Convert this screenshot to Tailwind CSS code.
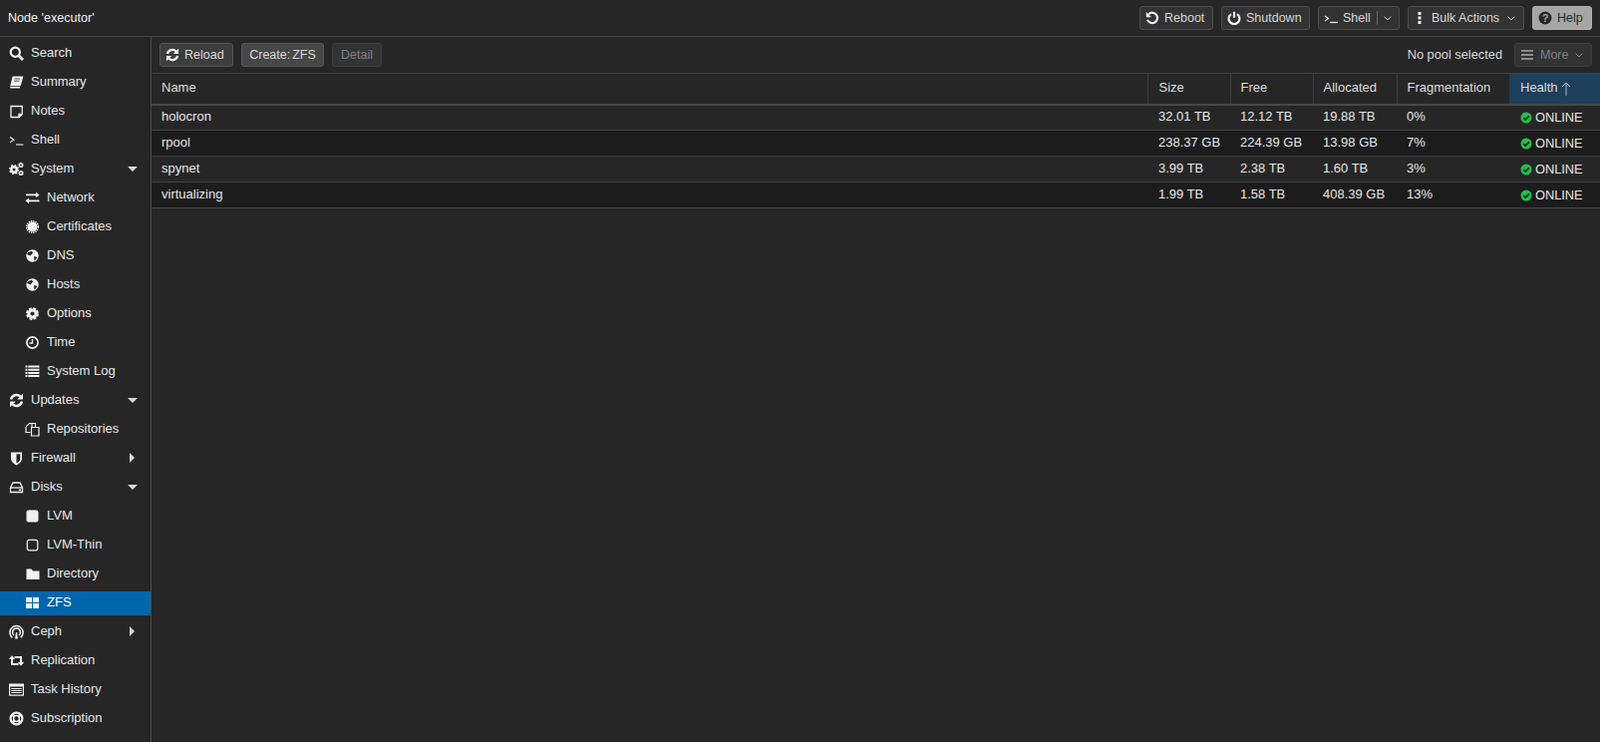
<!DOCTYPE html>
<html lang="en">
<head>
<meta charset="UTF-8">
<title>Node 'executor'</title>
<script src="https://cdn.jsdelivr.net/npm/@tailwindcss/browser@4"></script>
</head>
<body class="bg-[#262626] text-[#f2f2f2] font-['Liberation_Sans',Arial,sans-serif] text-[13px] h-[744px] w-[1605px] overflow-hidden flex flex-col">

<!-- top bar -->
<header class="h-[37px] border-b border-[#3f3f3f] flex items-center justify-between pl-2 pr-2">
	<div class="text-[12.6px]">Node 'executor'</div>
	<div class="flex items-center gap-2 text-[12.5px] text-[#d8d8d8]">
		<button class="h-6 w-[74px] flex items-center gap-[5px] pl-[5px] rounded-[3px] border border-[#4d4d4d] bg-[#333333]">
			<svg class="w-3.5 h-3.5" viewBox="0 0 14 14" fill="none" stroke="#f2f2f2" stroke-width="2.2"><path d="M3.200 3.200A5.200 5.200 0 1 1 2 8.800"/><path d="M.8 1v5.200H6z" fill="#f2f2f2" stroke="none"/></svg>Reboot</button>
		<button class="h-6 w-[89px] flex items-center gap-[5px] pl-[5px] rounded-[3px] border border-[#4d4d4d] bg-[#333333]">
			<svg class="w-3.5 h-3.5" viewBox="0 0 14 14" fill="none" stroke="#f2f2f2" stroke-width="2.2"><path d="M4 3.200a5.400 5.400 0 1 0 6 0"/><path d="M7 .8v6"/></svg>Shutdown</button>
		<button class="h-6 w-[82px] flex items-center pl-[5px] rounded-[3px] border border-[#4d4d4d] bg-[#333333]">
			<svg class="w-[14px] h-3 mr-[5px]" viewBox="0 0 14 12" fill="none" stroke="#f2f2f2" stroke-width="1.2"><path d="M1 4l3.500 2.500L1 9"/><path d="M6 10.500h8"/></svg>Shell<span class="w-px h-[14px] bg-[#666666] ml-1.5 mr-1.5"></span>
			<svg class="w-2 h-2" viewBox="0 0 8 8" fill="none" stroke="#bbbbbb"><path d="M.5 2.500L4 6l3.500-3.500"/></svg></button>
		<button class="h-6 w-[117px] flex items-center pl-[9px] rounded-[3px] border border-[#4d4d4d] bg-[#333333]">
			<svg class="w-1 h-3 mr-[10px]" viewBox="0 0 4 12" fill="#f2f2f2"><rect x="0.500" width="3" height="3"/><rect x="0.500" y="4.500" width="3" height="3"/><rect x="0.500" y="9" width="3" height="3"/></svg>Bulk Actions
			<svg class="w-2 h-2 ml-2" viewBox="0 0 8 8" fill="none" stroke="#bbbbbb"><path d="M.5 2.500L4 6l3.500-3.500"/></svg></button>
		<button class="h-6 w-[60px] flex items-center gap-[5px] pl-[5px] rounded-[3px] border border-[#b0b0b0] bg-[#a6a6a6] text-[#2a2a2a]">
			<svg class="w-3.5 h-3.5" viewBox="0 0 14 14"><circle cx="7" cy="7" r="6.500" fill="#262626"/><text x="7" y="11" text-anchor="middle" font-size="11" font-weight="700" fill="#a6a6a6">?</text></svg>Help</button>
	</div>
</header>

<div class="flex flex-1 min-h-0">
	<!-- tree menu -->
	<nav class="w-[152px] shrink-0 border-r border-[#4a4a4a] pt-[4px] flex flex-col gap-[5px] text-[#e6e6e6]">
		<div class="h-6 flex items-center pl-[9px]"><svg class="w-[15px] h-[15px] mr-[7px]" viewBox="0 0 15 15" fill="none" stroke="#f2f2f2" stroke-width="2.200"><circle cx="6.300" cy="6.300" r="4.600"/><path d="M9.800 9.800l4.200 4.200" stroke-width="2.800"/></svg>Search</div>
		<div class="h-6 flex items-center pl-[9px]"><svg class="w-[15px] h-[15px] mr-[7px]" viewBox="0 0 15 15" fill="#f2f2f2"><path d="M3.600 1.500h10.800l-2.600 9.500H1.200z"/><path d="M1 11.800h10.200l-.3 1.700H1.400z"/><path d="M5.500 4h5.500M5 6.200h5.500" stroke="#262626" stroke-width=".8"/></svg>Summary</div>
		<div class="h-6 flex items-center pl-[9px]"><svg class="w-[15px] h-[15px] mr-[7px]" viewBox="0 0 15 15" fill="none" stroke="#f2f2f2" stroke-width="1.300"><path d="M2 2.500h11.200v8l-3 3H2z"/><path d="M13 10.500h-3v3" fill="#f2f2f2"/></svg>Notes</div>
		<div class="h-6 flex items-center pl-[9px]"><svg class="w-[15px] h-[15px] mr-[7px]" viewBox="0 0 15 15" fill="none" stroke="#f2f2f2" stroke-width="1.100"><path d="M1 4.500l4 2.700-4 2.700"/><path d="M7 12h7.500"/></svg>Shell</div>
		<div class="h-6 flex items-center pl-[9px] relative"><svg class="w-[15px] h-[15px] mr-[7px]" viewBox="0 0 15 15" fill="none" stroke="#f2f2f2"><circle cx="5" cy="8" r="2.700" stroke-width="2.400"/><circle cx="5" cy="8" r="4.300" stroke-width="1.600" stroke-dasharray="1.700 1.680"/><circle cx="12" cy="3.500" r="1.700" stroke-width="1.600"/><circle cx="12" cy="11.500" r="1.700" stroke-width="1.600"/></svg>System<span class="absolute left-[128px] w-0 h-0 border-x-[5px] border-x-transparent border-t-[5px] border-t-[#d9d9d9]"></span></div>
		<div class="h-6 flex items-center pl-[25px]"><svg class="w-[15px] h-[15px] mr-[7px]" viewBox="0 0 15 15" fill="#f2f2f2"><path d="M1 3.500h10V1.500l3.500 2.900L11 7.200V5.300H1zM14.500 9.500H4V7.500L.5 10.300 4 13.200v-1.900h10.500z"/></svg>Network</div>
		<div class="h-6 flex items-center pl-[25px]"><svg class="w-[15px] h-[15px] mr-[7px]" viewBox="0 0 15 15"><circle cx="7.500" cy="7.500" r="5" fill="#f2f2f2"/><circle cx="7.500" cy="7.500" r="5.800" fill="none" stroke="#f2f2f2" stroke-width="1.600" stroke-dasharray="1.300 .98"/></svg>Certificates</div>
		<div class="h-6 flex items-center pl-[25px]"><svg class="w-[15px] h-[15px] mr-[7px]" viewBox="0 0 15 15"><circle cx="7.500" cy="7.500" r="6.200" fill="#f2f2f2"/><path d="M3 4l4-1.200 1 1.700-2.500 3-3.500-1.500zM9 8l3.500 1-3 3.800z" fill="#262626"/></svg>DNS</div>
		<div class="h-6 flex items-center pl-[25px]"><svg class="w-[15px] h-[15px] mr-[7px]" viewBox="0 0 15 15"><circle cx="7.500" cy="7.500" r="6.200" fill="#f2f2f2"/><path d="M3 4l4-1.200 1 1.700-2.500 3-3.500-1.500zM9 8l3.500 1-3 3.800z" fill="#262626"/></svg>Hosts</div>
		<div class="h-6 flex items-center pl-[25px]"><svg class="w-[15px] h-[15px] mr-[7px]" viewBox="0 0 15 15" fill="none"><circle cx="7.500" cy="7.500" r="3.600" stroke="#f2f2f2" stroke-width="3"/><circle cx="7.500" cy="7.500" r="5.400" stroke="#f2f2f2" stroke-width="2" stroke-dasharray="2.800 1.440"/></svg>Options</div>
		<div class="h-6 flex items-center pl-[25px]"><svg class="w-[15px] h-[15px] mr-[7px]" viewBox="0 0 15 15" fill="none" stroke="#f2f2f2"><circle cx="7.500" cy="7.500" r="5.600" stroke-width="1.700"/><path d="M7.500 4v4H4.500" stroke-width="1.400"/></svg>Time</div>
		<div class="h-6 flex items-center pl-[25px]"><svg class="w-[15px] h-[15px] mr-[7px]" viewBox="0 0 15 15" fill="#f2f2f2"><path d="M.5 1.500h2v2h-2zM.5 4.700h2v2h-2zM.5 7.900h2v2h-2zM.5 11.100h2v2h-2zM3.300 1.500h11.200v2H3.300zM3.300 4.700h11.200v2H3.300zM3.300 7.900h11.200v2H3.300zM3.300 11.100h11.200v2H3.300z"/></svg>System Log</div>
		<div class="h-6 flex items-center pl-[9px] relative"><svg class="w-[15px] h-[15px] mr-[7px]" viewBox="0 0 15 15" fill="none" stroke="#f2f2f2" stroke-width="2.400"><path d="M2 6.500a5.600 5.600 0 0 1 9.500-2.800M13 8.500a5.600 5.600 0 0 1-9.500 2.800"/><path d="M14 .8v5.700H8.300zM1 14.200V8.500h5.700z" fill="#f2f2f2" stroke="none"/></svg>Updates<span class="absolute left-[128px] w-0 h-0 border-x-[5px] border-x-transparent border-t-[5px] border-t-[#d9d9d9]"></span></div>
		<div class="h-6 flex items-center pl-[25px]"><svg class="w-[15px] h-[15px] mr-[7px]" viewBox="0 0 15 15" fill="none" stroke="#f2f2f2" stroke-width="1.200"><path d="M7 5.500V1.500h3.500v4M1 5l3.500-3.500H7M1 5v5.500h4.500"/><path d="M6.500 5.500H14v8.500H6.500z"/></svg>Repositories</div>
		<div class="h-6 flex items-center pl-[9px] relative"><svg class="w-[15px] h-[15px] mr-[7px]" viewBox="0 0 15 15"><path d="M2 1.500h11v6.500c0 3-3.500 5.300-5.500 6.500C5.500 13.300 2 11 2 8z" fill="#f2f2f2"/><path d="M7.500 3.200h3.800v4.800c0 2-2.300 3.600-3.800 4.500z" fill="#262626"/></svg>Firewall<span class="absolute left-[130px] w-0 h-0 border-y-[5px] border-y-transparent border-l-[5px] border-l-[#d9d9d9]"></span></div>
		<div class="h-6 flex items-center pl-[9px] relative"><svg class="w-[15px] h-[15px] mr-[7px]" viewBox="0 0 15 15" fill="none" stroke="#f2f2f2" stroke-width="1.300"><path d="M1.500 8L4 3h7l2.500 5v4.500h-12z"/><path d="M1.500 8h12"/><path d="M9.800 10.300h2.200" stroke-width="1.500"/></svg>Disks<span class="absolute left-[128px] w-0 h-0 border-x-[5px] border-x-transparent border-t-[5px] border-t-[#d9d9d9]"></span></div>
		<div class="h-6 flex items-center pl-[25px]"><svg class="w-[15px] h-[15px] mr-[7px]" viewBox="0 0 15 15"><rect x="1.500" y="1.500" width="12" height="12" rx="2" fill="#f2f2f2"/></svg>LVM</div>
		<div class="h-6 flex items-center pl-[25px]"><svg class="w-[15px] h-[15px] mr-[7px]" viewBox="0 0 15 15"><rect x="2.300" y="2.300" width="10.500" height="10.500" rx="2" fill="none" stroke="#f2f2f2" stroke-width="1.200"/></svg>LVM-Thin</div>
		<div class="h-6 flex items-center pl-[25px]"><svg class="w-[15px] h-[15px] mr-[7px]" viewBox="0 0 15 15"><path d="M1.500 2.500h5l1.500 2h6.500v8.500h-13z" fill="#f2f2f2"/></svg>Directory</div>
		<div class="h-6 mt-px -mb-px pb-[2px] flex items-center pl-[25px] bg-[#0066ac] text-white"><svg class="w-[15px] h-[15px] mr-[7px]" viewBox="0 0 15 15" fill="#f2f2f2"><rect x="1" y="2" width="6" height="5"/><rect x="8" y="2" width="6" height="5"/><rect x="1" y="8" width="6" height="5"/><rect x="8" y="8" width="6" height="5"/></svg>ZFS</div>
		<div class="h-6 flex items-center pl-[9px] relative"><svg class="w-[15px] h-[15px] mr-[7px]" viewBox="0 0 15 15" fill="none" stroke="#f2f2f2" stroke-width="1.500"><path d="M3.300 13.300a6.600 6.600 0 1 1 8.400 0"/><path d="M5 11a3.900 3.900 0 1 1 5 0"/><path d="M6 14.500L7 8h1l1 6.500z" fill="#f2f2f2" stroke="none"/></svg>Ceph<span class="absolute left-[130px] w-0 h-0 border-y-[5px] border-y-transparent border-l-[5px] border-l-[#d9d9d9]"></span></div>
		<div class="h-6 flex items-center pl-[9px]"><svg class="w-[15px] h-[15px] mr-[7px]" viewBox="0 0 15 15" fill="none" stroke="#f2f2f2" stroke-width="2"><path d="M3 5v6h6.500"/><path d="M12 10V4H5.500"/><path d="M-.2 6L3 2.200 6.200 6zM8.800 9L12 12.800 15.200 9z" fill="#f2f2f2" stroke="none"/></svg>Replication</div>
		<div class="h-6 flex items-center pl-[9px]"><svg class="w-[15px] h-[15px] mr-[7px]" viewBox="0 0 15 15"><rect x=".6" y="2.100" width="13.800" height="11" fill="none" stroke="#f2f2f2" stroke-width="1.200"/><rect x=".6" y="2.100" width="13.800" height="2.400" fill="#f2f2f2"/><path d="M2.300 6.500h10.400M2.300 8.500h10.400M2.300 10.500h10.400" stroke="#f2f2f2" stroke-width="1" /></svg>Task History</div>
		<div class="h-6 flex items-center pl-[9px]"><svg class="w-[15px] h-[15px] mr-[7px]" viewBox="0 0 15 15" fill="none" stroke="#f2f2f2"><circle cx="7.500" cy="7.500" r="5.900" stroke-width="2.200"/><circle cx="7.500" cy="7.500" r="2.900" stroke-width="1.500"/><path d="M3 3l2.500 2.500M12 3L9.500 5.500M3 12l2.500-2.500M12 12L9.500 9.500" stroke-width="2.800"/></svg>Subscription</div>
	</nav>

	<main class="flex-1 min-w-0 flex flex-col">
		<!-- toolbar -->
		<div class="h-[36px] flex items-center pl-2 pr-2 gap-2 text-[12.5px] text-[#d8d8d8]">
			<button class="h-6 w-[74px] flex items-center gap-[5px] pl-[5px] rounded-[3px] border border-[#555555] bg-[#3d3d3d]"><svg class="w-3.5 h-3.5" viewBox="0 0 15 15" fill="none" stroke="#f2f2f2" stroke-width="2.400"><path d="M2 6.500a5.600 5.600 0 0 1 9.500-2.800M13 8.500a5.600 5.600 0 0 1-9.500 2.800"/><path d="M14 .8v5.700H8.300zM1 14.200V8.500h5.700z" fill="#f2f2f2" stroke="none"/></svg>Reload</button>
			<button class="h-6 w-[83px] rounded-[3px] border border-[#555555] bg-[#474747] [word-spacing:-1.5px]">Create: ZFS</button>
			<button class="h-6 w-[50px] rounded-[3px] border border-[#3d3d3d] bg-[#333333] text-[#808080]">Detail</button>
			<div class="ml-auto mr-1 text-[12.8px]">No pool selected</div>
			<button class="h-6 w-[78px] flex items-center pl-1.5 rounded-[3px] border border-[#3d3d3d] bg-[#333333] text-[#808080]">
				<svg class="w-3 h-3 mr-[7px]" viewBox="0 0 12 12" fill="#8c8c8c"><rect y="1" width="12" height="2"/><rect y="5" width="12" height="2"/><rect y="9" width="12" height="2"/></svg>More
				<svg class="w-2 h-2 ml-[7px]" viewBox="0 0 8 8" fill="none" stroke="#808080"><path d="M.5 2.500L4 6l3.500-3.500"/></svg></button>
		</div>

		<!-- pools grid -->
		<table class="w-full table-fixed border-collapse">
			<colgroup><col><col class="w-[83px]"><col class="w-[83px]"><col class="w-[84px]"><col class="w-[113px]"><col class="w-[91px]"></colgroup>
			<thead class="text-[#dcdcdc] text-left">
				<tr class="h-[31px] border-t border-[#3f3f3f] border-b-[2px] border-b-[#484848]">
					<th class="font-normal pl-[10px] pb-[2px]">Name</th>
					<th class="font-normal pl-[11px] pb-[2px] border-l border-[#3f3f3f]">Size</th>
					<th class="font-normal pl-[10px] pb-[2px] border-l border-[#3f3f3f]">Free</th>
					<th class="font-normal pl-[10px] pb-[2px] border-l border-[#3f3f3f]">Allocated</th>
					<th class="font-normal pl-[10px] pb-[2px] border-l border-[#3f3f3f]">Fragmentation</th>
					<th class="font-normal pl-[11px] pb-[2px] bg-[#1c3f5c]"><span class="inline-flex items-center gap-[3px]">Health<svg class="w-[10px] h-[14px] mt-[2px]" viewBox="0 0 10 14" fill="none" stroke="#a9bccb"><path d="M5 14V1M1 5l4-4 4 4"/></svg></span></th>
				</tr>
			</thead>
			<tbody class="text-[#e6e6e6]">
				<tr class="h-[26px] border-b border-[#444444]"><td class="pl-[10px] pb-[2px]">holocron</td><td class="pl-[11px] pb-[2px]">32.01 TB</td><td class="pl-[10px] pb-[2px]">12.12 TB</td><td class="pl-[10px] pb-[2px]">19.88 TB</td><td class="pl-[10px] pb-[2px]">0%</td><td class="pl-[11px]"><span class="inline-flex items-center gap-[3px] pt-[2px] text-[12.8px]"><svg class="w-3 h-3" viewBox="0 0 12 12"><circle cx="6" cy="6" r="5.500" fill="#21bf4b"/><path d="M3.200 6l2 2 3.600-3.600" fill="none" stroke="#262626" stroke-width="1.700"/></svg>ONLINE</span></td></tr>
				<tr class="h-[26px] border-b border-[#444444] bg-[#1c1c1c]"><td class="pl-[10px] pb-[2px]">rpool</td><td class="pl-[11px] pb-[2px]">238.37 GB</td><td class="pl-[10px] pb-[2px]">224.39 GB</td><td class="pl-[10px] pb-[2px]">13.98 GB</td><td class="pl-[10px] pb-[2px]">7%</td><td class="pl-[11px]"><span class="inline-flex items-center gap-[3px] pt-[2px] text-[12.8px]"><svg class="w-3 h-3" viewBox="0 0 12 12"><circle cx="6" cy="6" r="5.500" fill="#21bf4b"/><path d="M3.200 6l2 2 3.600-3.600" fill="none" stroke="#1c1c1c" stroke-width="1.700"/></svg>ONLINE</span></td></tr>
				<tr class="h-[26px] border-b border-[#444444]"><td class="pl-[10px] pb-[2px]">spynet</td><td class="pl-[11px] pb-[2px]">3.99 TB</td><td class="pl-[10px] pb-[2px]">2.38 TB</td><td class="pl-[10px] pb-[2px]">1.60 TB</td><td class="pl-[10px] pb-[2px]">3%</td><td class="pl-[11px]"><span class="inline-flex items-center gap-[3px] pt-[2px] text-[12.8px]"><svg class="w-3 h-3" viewBox="0 0 12 12"><circle cx="6" cy="6" r="5.500" fill="#21bf4b"/><path d="M3.200 6l2 2 3.600-3.600" fill="none" stroke="#262626" stroke-width="1.700"/></svg>ONLINE</span></td></tr>
				<tr class="h-[26px] border-b border-[#444444] bg-[#1c1c1c]"><td class="pl-[10px] pb-[2px]">virtualizing</td><td class="pl-[11px] pb-[2px]">1.99 TB</td><td class="pl-[10px] pb-[2px]">1.58 TB</td><td class="pl-[10px] pb-[2px]">408.39 GB</td><td class="pl-[10px] pb-[2px]">13%</td><td class="pl-[11px]"><span class="inline-flex items-center gap-[3px] pt-[2px] text-[12.8px]"><svg class="w-3 h-3" viewBox="0 0 12 12"><circle cx="6" cy="6" r="5.500" fill="#21bf4b"/><path d="M3.200 6l2 2 3.600-3.600" fill="none" stroke="#1c1c1c" stroke-width="1.700"/></svg>ONLINE</span></td></tr>
			</tbody>
		</table>
	</main>
</div>
</body>
</html>
